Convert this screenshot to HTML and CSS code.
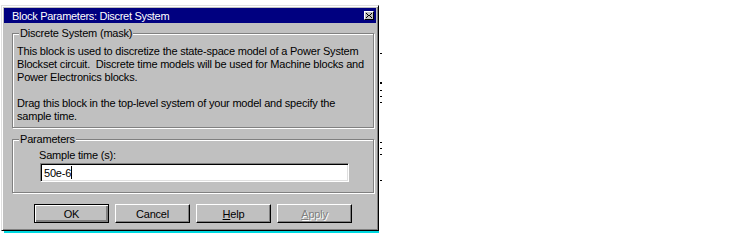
FILE: index.html
```html
<!DOCTYPE html>
<html lang="en">
<head>
    <meta charset="UTF-8">
    <title>Block Parameters: Discret System</title>
    <link rel="stylesheet" href="styles.css">
</head>
<body>
    <div class="canvas">
        <div class="window">
            <div class="titlebar">
                <span class="title">Block Parameters: Discret System</span>
                <span class="close">
                    <svg width="6" height="5" viewBox="0 0 6 5">
                        <path d="M0 0h1v1h-1zM5 0h1v1h-1zM1 1h1v1h-1zM4 1h1v1h-1zM2 2h2v1h-2zM1 3h1v1h-1zM4 3h1v1h-1zM0 4h1v1h-1zM5 4h1v1h-1z" fill="#000"/>
                    </svg>
                </span>
            </div>

            <fieldset class="group desc">
                <legend>Discrete System (mask)</legend>
                <p>This block is used to discretize the state-space model of a Power System<br>
                Blockset circuit.&nbsp; Discrete time models will be used for Machine blocks and<br>
                Power Electronics blocks.</p>
                <p>Drag this block in the top-level system of your model and specify the<br>
                sample time.</p>
            </fieldset>

            <fieldset class="group params">
                <legend>Parameters</legend>
                <label for="ts">Sample time (s):</label>
                <div class="field"><span id="ts">50e-6</span><span class="caret"></span></div>
            </fieldset>

            <div class="buttons">
                <button class="btn default">OK</button>
                <button class="btn">Cancel</button>
                <button class="btn"><u>H</u>elp</button>
                <button class="btn disabled"><u>A</u>pply</button>
            </div>
        </div>

        <!-- bits of the model diagram peeking out behind the dialog -->
        <span class="tick" style="top: 53px"></span>
        <span class="tick thick" style="top: 82px"></span>
        <span class="tick" style="top: 90px"></span>
        <span class="tick" style="top: 96px"></span>
        <span class="tick" style="top: 102px"></span>
        <span class="tick" style="top: 142px"></span>
        <span class="tick" style="top: 148px"></span>
        <span class="tick" style="top: 154px"></span>
        <span class="tick" style="top: 180px"></span>
        <span class="baseline"></span>
    </div>
</body>
</html>
```

FILE: styles.css
```css
body {
    margin: 0;
    padding: 0;
    background: #fff;
    font-family: 'Liberation Sans', Arial, sans-serif;
    font-size: 11px;
    letter-spacing: -0.2px;
    color: #000;
}
.canvas {
    position: relative;
    width: 750px;
    height: 240px;
    box-sizing: border-box;
    padding: 5px 0 0 1px;
}
.window {
    width: 378px;
    height: 226px;
    box-sizing: border-box;
    padding: 1px;
    background: #c0c0c0;
    border: 1px solid;
    border-color: #dfdfdf #000 #000 #dfdfdf;
    box-shadow: inset 1px 1px 0 #fff, inset -1px -1px 0 #808080;
    display: flex;
    flex-direction: column;
    overflow: hidden;
}
.titlebar {
    flex: none;
    height: 15px;
    margin: 1px 1px 0 1px;
    background: #000080;
    color: #fff;
    display: flex;
    align-items: center;
    justify-content: space-between;
    padding: 0 2px 0 8px;
}
.title {
    font-size: 11px;
    letter-spacing: -0.3px;
}
.close {
    width: 8px;
    height: 7px;
    background: #c0c0c0;
    border: 1px solid;
    border-color: #fff #000 #000 #fff;
    display: flex;
    align-items: center;
    justify-content: center;
}
.group {
    flex: none;
    box-sizing: border-box;
    margin: 0 3px 0 9px;
    padding: 0 4px;
    border: 1px solid #808080;
    box-shadow: inset 1px 1px 0 #fff, 1px 1px 0 #fff;
    white-space: nowrap;
}
.group legend {
    padding: 0 1px;
    margin-left: 2px;
    background: #c0c0c0;
    line-height: 13px;
}
.desc {
    margin-top: 4px;
    height: 101px;
}
.desc p {
    margin: 5px 0 13px 0;
    line-height: 13px;
}
.desc p + p {
    margin-top: 0;
}
.params {
    margin-top: 5px;
    height: 60px;
}
.params label {
    display: block;
    line-height: 13px;
    margin: 3px 0 0 22px;
}
.field {
    margin: 1px 0 0 23px;
    width: 309px;
    height: 19px;
    box-sizing: border-box;
    background: #fff;
    border: 1px solid;
    border-color: #808080 #fff #fff #808080;
    box-shadow: inset 1px 1px 0 #000, inset -1px -1px 0 #dfdfdf;
    padding: 0 3px;
    display: flex;
    align-items: center;
}
.caret {
    width: 1px;
    height: 13px;
    background: #000;
}
.buttons {
    flex: none;
    display: flex;
    gap: 6px;
    margin: 11px 0 0 31px;
}
.btn {
    width: 75px;
    height: 19px;
    padding: 0;
    background: #c0c0c0;
    border: 1px solid;
    border-color: #fff #000 #000 #fff;
    box-shadow: inset -1px -1px 0 #808080;
    font-family: 'Liberation Sans', Arial, sans-serif;
    font-size: 11px;
    letter-spacing: -0.2px;
    color: #000;
}
.btn.default {
    border-color: #000;
    box-shadow: inset 1px 1px 0 #fff, inset -2px -2px 0 #808080, inset -1px -1px 0 #000;
}
.btn.disabled {
    color: #808080;
    text-shadow: 1px 1px 0 #fff;
}
.tick {
    position: absolute;
    left: 380px;
    width: 2px;
    height: 1px;
    background: #000;
}
.tick.thick {
    height: 2px;
}
.baseline {
    position: absolute;
    left: 4px;
    top: 231px;
    width: 375px;
    height: 2px;
    background: #00d8e0;
}
```
